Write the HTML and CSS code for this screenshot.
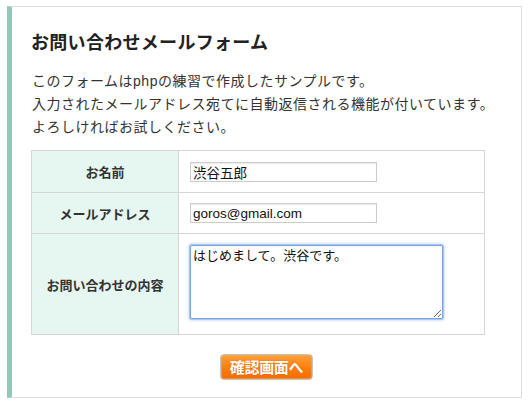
FILE: index.html
```html
<!DOCTYPE html>
<html lang="ja">
<head>
<meta charset="utf-8">
<title>お問い合わせメールフォーム</title>
<link rel="stylesheet" href="styles.css">
</head>
<body>
<div class="panel">
  <h1 class="title">お問い合わせメールフォーム</h1>
  <p class="lead">このフォームはphpの練習で作成したサンプルです。<br>入力されたメールアドレス宛てに自動返信される機能が付いています。<br>よろしければお試しください。</p>
  <form class="form">
    <table class="form-table">
      <tr class="row-1">
        <th class="label">お名前</th>
        <td class="field"><input class="text-input" type="text" value="渋谷五郎"></td>
      </tr>
      <tr class="row-2">
        <th class="label">メールアドレス</th>
        <td class="field"><input class="text-input" type="text" value="goros@gmail.com"></td>
      </tr>
      <tr class="row-3">
        <th class="label">お問い合わせの内容</th>
        <td class="field field-top"><textarea class="text-area">はじめまして。渋谷です。</textarea></td>
      </tr>
    </table>
    <div class="actions">
      <button type="button" class="submit">確認画面へ</button>
    </div>
  </form>
</div>
</body>
</html>
```
FILE: styles.css
```css
html, body {
  margin: 0;
  padding: 0;
  background: #ffffff;
}

body {
  padding: 6px 8px 0 7px;
  font-family: "Liberation Sans", "Noto Sans CJK JP", sans-serif;
  color: #333333;
}

.panel {
  border: 1px solid #dedede;
  border-left: 5px solid #8ecab4;
  padding: 0 19px 17px 19px;
  box-sizing: border-box;
}

.title {
  margin: 21px 0 0 0;
  font-size: 18px;
  line-height: 26px;
  font-weight: bold;
  letter-spacing: 0.3px;
  color: #222222;
  font-family: "Noto Sans CJK JP", sans-serif;
}

.lead {
  margin: 16px 0 0 1px;
  font-size: 14px;
  line-height: 23px;
  letter-spacing: 0.5px;
  color: #333333;
}

.form {
  margin: 11px 0 0 0;
}

.form-table {
  border-collapse: collapse;
  width: 454px;
  table-layout: fixed;
}

.label,
.field {
  border: 1px solid #d6d6d6;
  padding: 0;
}

.label {
  width: 146px;
  background: #e6f6f1;
  font-size: 13px;
  font-weight: bold;
  color: #333333;
  text-align: center;
  vertical-align: middle;
  font-family: "Noto Sans CJK JP", sans-serif;
}

.field {
  padding-left: 11px;
  vertical-align: middle;
  background: #ffffff;
}

.row-1 .label, .row-1 .field { height: 41px; }
.row-2 .label, .row-2 .field { height: 40px; }
.row-3 .label, .row-3 .field { height: 100px; }

.field-top {
  vertical-align: top;
  padding-top: 11px;
  box-sizing: border-box;
}

.text-input {
  display: block;
  box-sizing: border-box;
  width: 187px;
  height: 20px;
  margin: 0;
  padding: 0 2px;
  border: 1px solid #cccccc;
  border-radius: 0;
  box-shadow: inset 0 1px 1px rgba(0, 0, 0, 0.08);
  font-family: "Liberation Sans", "Noto Sans CJK JP", sans-serif;
  font-size: 13.5px;
  color: #111111;
  background: #ffffff;
  outline: none;
}

.text-area {
  display: block;
  box-sizing: border-box;
  width: 253px;
  height: 74px;
  margin: 0;
  padding: 2px 2px;
  border: 1px solid #79a6e0;
  border-radius: 2px;
  box-shadow: 0 0 0 1px #a9c8f0, 0 0 3px 1px rgba(110, 160, 230, 0.6);
  font-family: "Liberation Sans", "Noto Sans CJK JP", sans-serif;
  font-size: 13px;
  line-height: 16px;
  color: #111111;
  background: #ffffff;
  outline: none;
}

.actions {
  display: flex;
  justify-content: center;
  margin: 19px 0 0 0;
}

.submit {
  box-sizing: border-box;
  width: 93px;
  height: 26px;
  padding: 0;
  border: 1px solid #c4c4c4;
  border-radius: 4px;
  background: linear-gradient(#ffa03a, #fb7e0a 55%, #f26c00);
  box-shadow: inset 0 0 0 1px rgba(255, 170, 80, 0.6);
  color: #ffffff;
  font-family: "Noto Sans CJK JP", sans-serif;
  font-size: 15px;
  font-weight: bold;
  line-height: 24px;
  letter-spacing: -0.3px;
  text-shadow: 0 0 1px rgba(150, 60, 0, 0.6);
  cursor: pointer;
}
```
